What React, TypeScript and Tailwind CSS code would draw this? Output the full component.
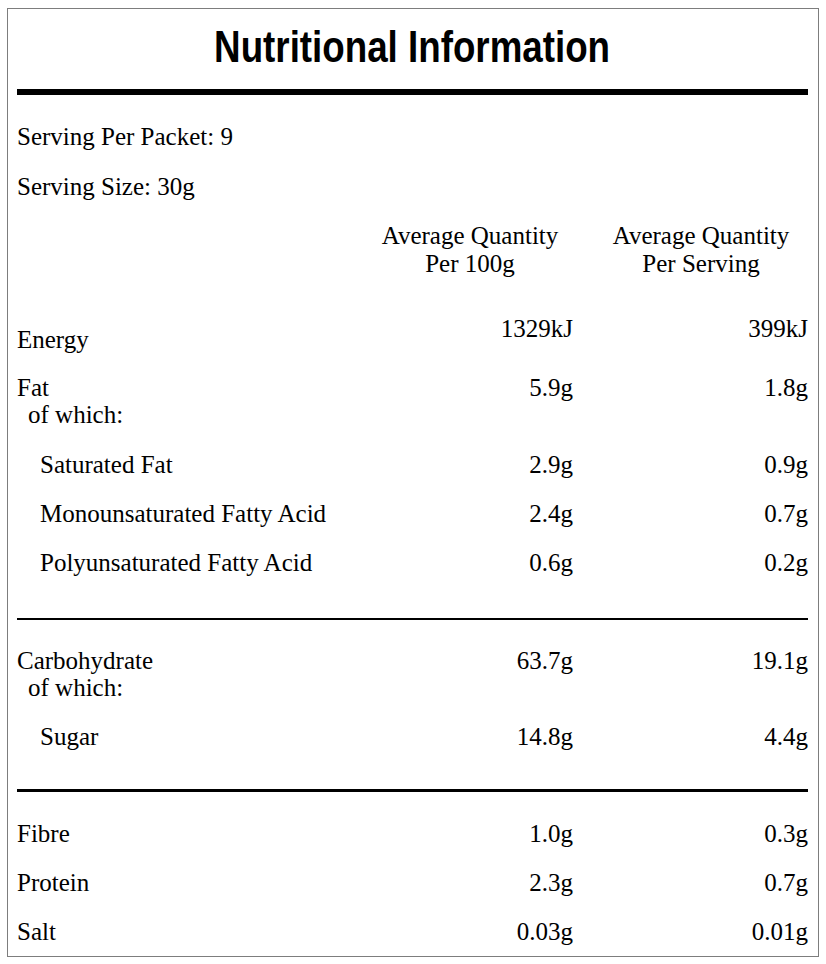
import React from 'react';

type Nutrient = {
  label: string;
  per100: string;
  perServing: string;
  indent?: boolean;
  sub?: string;
  rowClass: string;
};

const serif = "font-['Liberation_Serif','Times_New_Roman',serif]";
const cols = 'grid grid-cols-[329px_206px_214px] gap-x-[21px]';

const Row: React.FC<Nutrient> = ({ label, per100, perServing, indent, sub, rowClass }) => (
  <div className={`${cols} ${rowClass}`}>
    <div className={indent ? 'pl-[23px]' : ''}>
      <div className="h-[27px]">{label}</div>
      {sub && <div className="h-[28px] pl-[11px]">{sub}</div>}
    </div>
    <div className="h-[27px] text-right">{per100}</div>
    <div className="h-[27px] text-right">{perServing}</div>
  </div>
);

const Rule: React.FC<{ className: string }> = ({ className }) => (
  <div className={`w-full bg-black ${className}`} />
);

export default function App() {
  return (
    <div className="min-h-[964px] bg-white pt-[8px]">
      <div
        className={`ml-[7px] w-[812px] border border-[#7d7d7d] pl-[9px] pr-[10px] pb-[11px] text-[25px] leading-[27px] text-black ${serif}`}
      >
        {/* Title */}
        <h1 className="pt-[12px] text-center text-[44px] font-bold leading-[52px]">
          <span className="inline-block scale-x-[0.835] font-['Liberation_Sans_Narrow','Arial_Narrow','Liberation_Sans',Arial,sans-serif]">
            Nutritional Information
          </span>
        </h1>
        <Rule className="mt-[15px] h-[6px]" />

        <p className="mt-[28px] h-[27px]">Serving Per Packet: 9</p>
        <p className="mt-[22.5px] h-[27px]">Serving Size: 30g</p>

        {/* Column headings */}
        <div className={`mt-[22px] ${cols} leading-[28px]`}>
          <div />
          <div className="text-center">
            Average Quantity
            <br />
            Per 100g
          </div>
          <div className="text-center">
            Average Quantity
            <br />
            Per Serving
          </div>
        </div>

        {/* Energy: label sits a little lower than its values */}
        <div className={`mt-[37px] ${cols}`}>
          <div className="h-[38px] pt-[11px]">Energy</div>
          <div className="text-right">1329kJ</div>
          <div className="text-right">399kJ</div>
        </div>

        <Row label="Fat" sub="of which:" per100="5.9g" perServing="1.8g" rowClass="mt-[21px]" />
        <Row label="Saturated Fat" per100="2.9g" perServing="0.9g" indent rowClass="mt-[22px]" />
        <Row label="Monounsaturated Fatty Acid" per100="2.4g" perServing="0.7g" indent rowClass="mt-[22.5px]" />
        <Row label="Polyunsaturated Fatty Acid" per100="0.6g" perServing="0.2g" indent rowClass="mt-[22px]" />

        <Rule className="mt-[41.5px] h-[2px]" />

        <Row label="Carbohydrate" sub="of which:" per100="63.7g" perServing="19.1g" rowClass="mt-[27px]" />
        <Row label="Sugar" per100="14.8g" perServing="4.4g" indent rowClass="mt-[21px]" />

        <Rule className="mt-[39.5px] h-[2.5px]" />

        <Row label="Fibre" per100="1.0g" perServing="0.3g" rowClass="mt-[28.5px]" />
        <Row label="Protein" per100="2.3g" perServing="0.7g" rowClass="mt-[21.5px]" />
        <Row label="Salt" per100="0.03g" perServing="0.01g" rowClass="mt-[22px]" />
      </div>
    </div>
  );
}
